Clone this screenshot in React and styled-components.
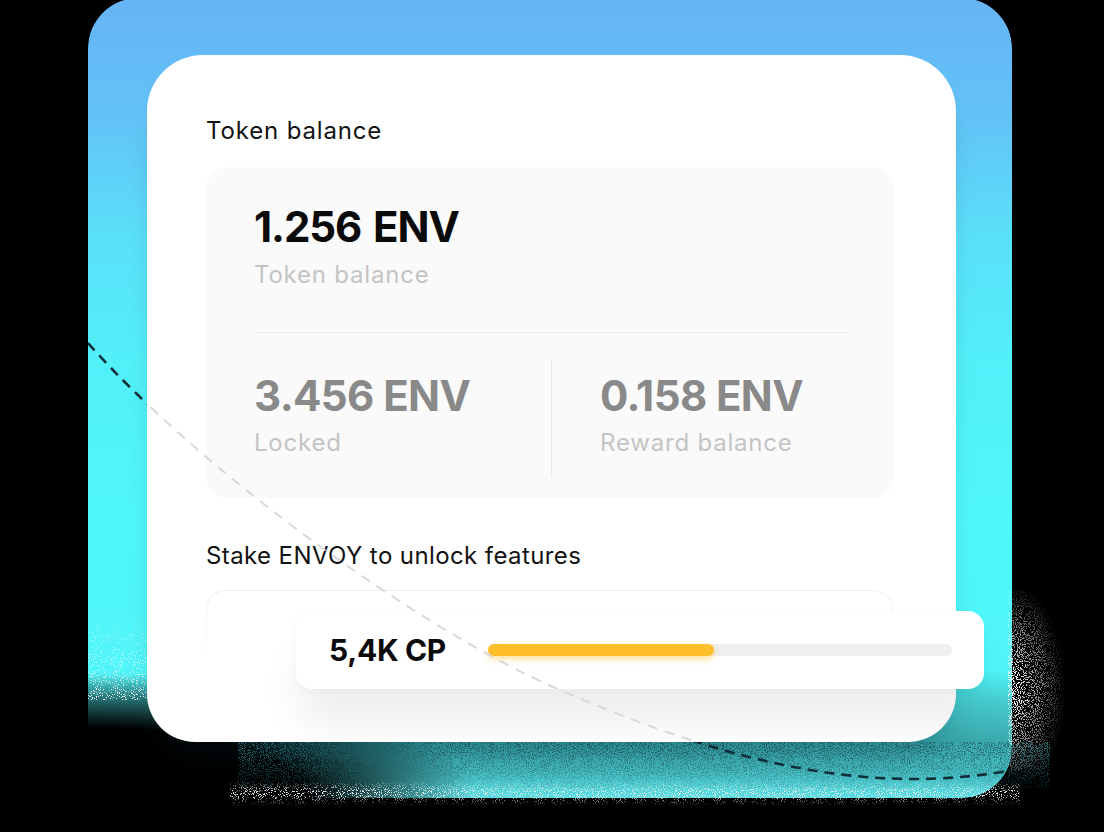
import React from "react";
import styled, { createGlobalStyle } from "styled-components";

const Global = createGlobalStyle`
  html, body { margin: 0; padding: 0; background: #000; }
  body { font-family: Inter, "Noto Sans", sans-serif; -webkit-font-smoothing: antialiased; }
  #root { width: 1104px; height: 832px; overflow: hidden; }
`;

const Page = styled.div`
  width: 1104px;
  height: 832px;
  box-sizing: border-box;
  padding-left: 88px;
  overflow: hidden;
  background: #000;
`;

const Blob = styled.div`
  position: relative;
  isolation: isolate;
  margin-top: -2px;
  width: 924px;
  height: 800px;
  box-sizing: border-box;
  padding: 57px 56px 56px 59px;
  &::before {
    content: "";
    position: absolute;
    inset: 0;
    z-index: -2;
    border-radius: 50px;
    background: linear-gradient(
      180deg,
      #66b3f5 0%,
      #62c3f7 15%,
      #5ae0f9 30%,
      #52eff9 45%,
      #4ff7f9 65%,
      #4ff5f8 84%,
      #46cdd0 88%,
      #3aa8ac 93%,
      #42b8bc 96%,
      #58dde3 100%
    );
    -webkit-mask-image: radial-gradient(ellipse 420px 135px at 0% 100%, transparent 52%, #000 92%);
    mask-image: radial-gradient(ellipse 420px 135px at 0% 100%, transparent 52%, #000 92%);
  }
`;

const CurveLayer = styled.svg`
  position: absolute;
  left: 0;
  top: 0;
  z-index: ${(p) => p.$z};
  pointer-events: none;
  overflow: hidden;
`;

const GrainLayer = styled.svg`
  position: absolute;
  left: ${(p) => p.$x}px;
  top: ${(p) => p.$y}px;
  z-index: -1;
  pointer-events: none;
  -webkit-mask-image: ${(p) => p.$mask};
  mask-image: ${(p) => p.$mask};
`;

function Grain({ id, x, y, w, h, rgb, threshold, mask, seed }) {
  const k = 14;
  const c = -k * threshold;
  return (
    <GrainLayer $x={x} $y={y} $mask={mask} width={w} height={h}>
      <filter id={id} x="0" y="0" width="100%" height="100%">
        <feTurbulence type="fractalNoise" baseFrequency="0.95" numOctaves="2" seed={seed} />
        <feColorMatrix
          type="matrix"
          values={`0 0 0 0 ${rgb[0]}  0 0 0 0 ${rgb[1]}  0 0 0 0 ${rgb[2]}  ${k} 0 0 0 ${c}`}
        />
      </filter>
      <rect width={w} height={h} filter={`url(#${id})`} />
    </GrainLayer>
  );
}

const Card = styled.div`
  position: relative;
  z-index: 1;
  width: 809px;
  height: 687px;
  box-sizing: border-box;
  padding: 61px 63px 0 59px;
  background: #fff;
  border-radius: 56px 56px 48px 48px;
  box-shadow: 0 24px 30px -14px rgba(0, 40, 50, 0.3);
`;

const SectionTitle = styled.h2`
  margin: ${(p) => (p.$spaced ? "43px" : "0")} 0 0;
  font-size: 24px;
  line-height: 30px;
  font-weight: 400;
  letter-spacing: ${(p) => (p.$spaced ? "0.4px" : "0.85px")};
  color: #131313;
`;

const BalancePanel = styled.div`
  margin-top: 21px;
  height: 331px;
  box-sizing: border-box;
  padding: 35px 45px 21px 48px;
  background: #fafafa;
  border-radius: 20px;
`;

const MainValue = styled.div`
  font-size: 42px;
  line-height: 50px;
  font-weight: 700;
  letter-spacing: -1.1px;
  word-spacing: 3px;
  color: #0b0b0b;
`;

const Label = styled.div`
  margin-top: ${(p) => p.$gap || 8}px;
  font-size: 24px;
  line-height: 30px;
  font-weight: 400;
  letter-spacing: 0.8px;
  color: #c4c4c4;
`;

const Divider = styled.div`
  margin-top: 42px;
  height: 1px;
  background: #ececec;
`;

const StatsRow = styled.div`
  margin-top: 25px;
  display: grid;
  grid-template-columns: 297px 1fr;
`;

const Stat = styled.div`
  height: 119px;
  box-sizing: border-box;
  padding: 13px 0 19px ${(p) => (p.$divided ? "48px" : "0")};
  border-left: ${(p) => (p.$divided ? "1px solid #ececec" : "none")};
`;

const StatValue = styled(MainValue)`
  letter-spacing: -0.6px;
  word-spacing: 0;
  color: #898989;
`;

const StakePanel = styled.div`
  margin-top: 19px;
  height: 152px;
  box-sizing: border-box;
  padding: 20px 0 0 89px;
  border: 1px solid transparent;
  border-bottom: none;
  border-radius: 20px 20px 0 0;
  background:
    linear-gradient(#fff, #fff) padding-box,
    linear-gradient(to bottom, #eeeeee, rgba(238, 238, 238, 0) 45%) border-box;
`;

const Pill = styled.div`
  width: 688px;
  height: 78px;
  box-sizing: border-box;
  display: flex;
  align-items: center;
  gap: 42px;
  padding: 0 32px 0 33px;
  background: #fff;
  border-radius: 16px;
  box-shadow: 0 38px 40px -4px rgba(0, 0, 0, 0.07), 0 2px 10px rgba(0, 0, 0, 0.03);
`;

const Points = styled.div`
  flex-shrink: 0;
  font-size: 30px;
  line-height: 36px;
  font-weight: 700;
  letter-spacing: -0.3px;
  color: #0b0b0b;
`;

const Track = styled.div`
  flex: 1;
  height: 12px;
  border-radius: 6px;
  background: #efefef;
`;

const Fill = styled.div`
  height: 100%;
  border-radius: 6px;
  background: #ffbf2a;
  box-shadow: 0 3px 6px rgba(255, 186, 30, 0.45);
`;

const CURVE = "M 88 343 C 200 470, 420 630, 560 690 C 700 750, 850 800, 1013 770";

export default function App() {
  const progress = 226 / 464;
  return (
    <>
      <Global />
      <Page>
        <Blob>
          <Grain
            id="g-right"
            x={920}
            y={592}
            w={58}
            h={180}
            rgb={[1, 1, 1]}
            threshold={0.52}
            seed={3}
            mask="radial-gradient(ellipse 100% 60% at 0% 55%, #000 15%, transparent 100%)"
          />
          <Grain
            id="g-bottom"
            x={142}
            y={782}
            w={790}
            h={26}
            rgb={[0.75, 0.85, 0.85]}
            threshold={0.57}
            seed={7}
            mask="linear-gradient(to bottom, transparent, #000 45%, #000 60%, transparent)"
          />
          <Grain
            id="g-band"
            x={150}
            y={744}
            w={812}
            h={46}
            rgb={[0.02, 0.15, 0.17]}
            threshold={0.52}
            seed={11}
            mask="linear-gradient(to bottom, #000, rgba(0,0,0,0.2))"
          />
          <Grain
            id="g-left"
            x={0}
            y={610}
            w={58}
            h={92}
            rgb={[1, 1, 1]}
            threshold={0.6}
            seed={5}
            mask="linear-gradient(to bottom, transparent, #000)"
          />
          <CurveLayer $z={0} width="924" height="800" viewBox="88 -2 924 800">
            <path d={CURVE} fill="none" stroke="#11303a" strokeWidth="2.6" strokeDasharray="10 7" />
          </CurveLayer>
          <Card>
            <CurveLayer $z={3} width="809" height="687" viewBox="147 55 809 687">
              <path d={CURVE} fill="none" stroke="#d9d9d9" strokeWidth="2" strokeDasharray="10 8" />
            </CurveLayer>
            <SectionTitle>Token balance</SectionTitle>
            <BalancePanel>
              <MainValue>1.256 ENV</MainValue>
              <Label>Token balance</Label>
              <Divider />
              <StatsRow>
                <Stat>
                  <StatValue>3.456 ENV</StatValue>
                  <Label $gap={7}>Locked</Label>
                </Stat>
                <Stat $divided>
                  <StatValue>0.158 ENV</StatValue>
                  <Label $gap={7}>Reward balance</Label>
                </Stat>
              </StatsRow>
            </BalancePanel>
            <SectionTitle $spaced>Stake ENVOY to unlock features</SectionTitle>
            <StakePanel>
              <Pill>
                <Points>5,4K CP</Points>
                <Track>
                  <Fill style={{ width: `${progress * 100}%` }} />
                </Track>
              </Pill>
            </StakePanel>
          </Card>
        </Blob>
      </Page>
    </>
  );
}
